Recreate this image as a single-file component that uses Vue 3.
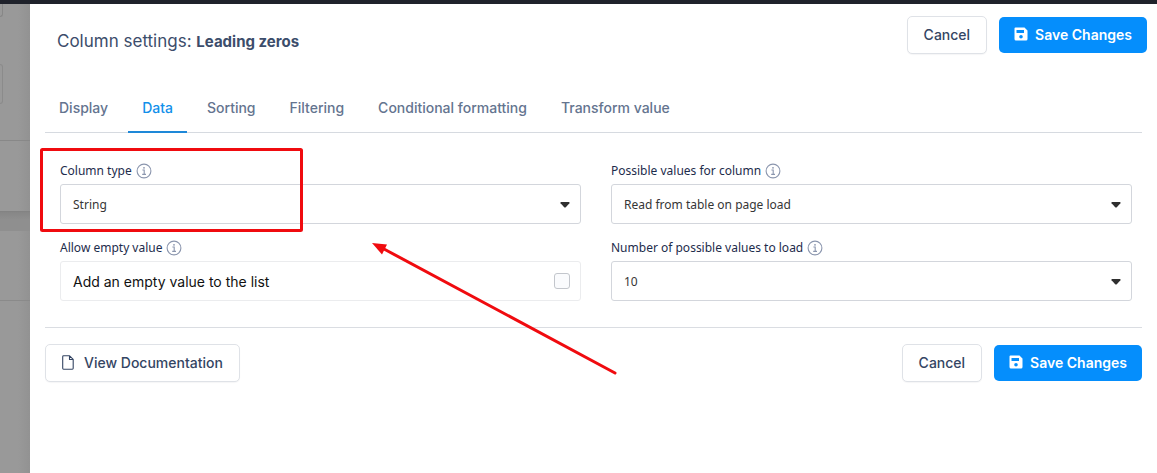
<template>
  <div class="page">
    <div class="topbar"></div>
    <div class="body">
      <div class="backdrop" aria-hidden="true">
        <div class="back-card">
          <div class="back-top"><span class="back-stub"></span></div>
          <div class="back-mid"><span class="back-box"></span></div>
          <div class="back-foot"></div>
        </div>
        <div class="back-gap"></div>
        <div class="back-row"></div>
        <div class="back-rest"></div>
      </div>

      <main class="panel">
        <header class="panel-header">
          <h1 class="title">Column settings: <strong>{{ columnName }}</strong></h1>
          <div class="btn-group">
            <button type="button" class="btn btn-default">Cancel</button>
            <button type="button" class="btn btn-primary">
              <svg class="icon-save" viewBox="0 0 14 14" width="14" height="14" fill="none">
                <path
                  fill="currentColor"
                  fill-rule="evenodd"
                  d="M1.5 0.5H10.5L13.5 3.5V12A1.5 1.5 0 0 1 12 13.5H2A1.5 1.5 0 0 1 0.5 12V1.5A1 1 0 0 1 1.5 0.5ZM2.5 3V6H10V3ZM7 8A1.8 1.8 0 1 0 7 11.6A1.8 1.8 0 1 0 7 8Z"
                />
              </svg>
              Save Changes
            </button>
          </div>
        </header>

        <nav class="tabs">
          <a
            v-for="tab in tabs"
            :key="tab"
            href="#"
            class="tab"
            :class="{ active: tab === activeTab }"
            @click.prevent="activeTab = tab"
          >{{ tab }}</a>
        </nav>

        <form class="fields" @submit.prevent>
          <div v-for="field in fields" :key="field.id" class="field">
            <div class="label-row">
              <label class="label" :for="field.id">{{ field.label }}</label>
              <svg class="icon-info" viewBox="0 0 16 16" width="16" height="16" fill="none">
                <circle cx="8" cy="8" r="6.9" stroke="currentColor" stroke-width="1.1" />
                <path d="M6.4 7H8.2V11.2M6.2 11.4H10" stroke="currentColor" stroke-width="1.1" />
                <circle cx="8" cy="4.8" r="0.9" fill="currentColor" />
              </svg>
            </div>
            <div v-if="field.options" class="select-wrap">
              <select :id="field.id" v-model="field.value" class="select">
                <option v-for="option in field.options" :key="option">{{ option }}</option>
              </select>
              <svg class="caret" viewBox="0 0 10 6" width="10" height="6">
                <path fill="currentColor" d="M1 0H9Q10 0.4 9.4 1.2L5.8 5.2Q5 6 4.2 5.2L0.6 1.2Q0 0.4 1 0Z" />
              </svg>
            </div>
            <label v-else class="check">
              <span>{{ field.text }}</span>
              <input :id="field.id" v-model="field.value" type="checkbox" class="checkbox" />
            </label>
          </div>
        </form>

        <footer class="panel-footer">
          <button type="button" class="btn btn-default">
            <svg class="icon-doc" viewBox="0 0 12 15" width="12" height="15" fill="none">
              <path
                d="M1.5 0.8H7.6L11.2 4.4V13.3Q11.2 14.2 10.3 14.2H1.5Q0.7 14.2 0.7 13.3V1.7Q0.7 0.8 1.5 0.8ZM7.5 1V4.5H11"
                stroke="currentColor"
                stroke-width="1.1"
                stroke-linejoin="round"
              />
            </svg>
            View Documentation
          </button>
          <div class="btn-group">
            <button type="button" class="btn btn-default">Cancel</button>
            <button type="button" class="btn btn-primary">
              <svg class="icon-save" viewBox="0 0 14 14" width="14" height="14" fill="none">
                <path
                  fill="currentColor"
                  fill-rule="evenodd"
                  d="M1.5 0.5H10.5L13.5 3.5V12A1.5 1.5 0 0 1 12 13.5H2A1.5 1.5 0 0 1 0.5 12V1.5A1 1 0 0 1 1.5 0.5ZM2.5 3V6H10V3ZM7 8A1.8 1.8 0 1 0 7 11.6A1.8 1.8 0 1 0 7 8Z"
                />
              </svg>
              Save Changes
            </button>
          </div>
        </footer>
      </main>
    </div>

    <!-- callout over the column type field -->
    <svg class="callout" viewBox="0 0 640 400" width="640" height="400" fill="none" aria-hidden="true">
      <rect x="41.5" y="149.5" width="260" height="81" rx="1" stroke="#f00b0f" stroke-width="3" />
      <path d="M384 249L615 373" stroke="#f00b0f" stroke-width="3" stroke-linecap="round" />
      <path d="M372 243L387 244.5L382 254.5Z" fill="#f00b0f" />
    </svg>
  </div>
</template>

<script setup>
import { ref } from 'vue'

const columnName = 'Leading zeros'

const tabs = ['Display', 'Data', 'Sorting', 'Filtering', 'Conditional formatting', 'Transform value']
const activeTab = ref('Data')

const fields = ref([
  { id: 'column-type', label: 'Column type', value: 'String', options: ['String'] },
  {
    id: 'possible-values',
    label: 'Possible values for column',
    value: 'Read from table on page load',
    options: ['Read from table on page load'],
  },
  { id: 'allow-empty', label: 'Allow empty value', value: false, text: 'Add an empty value to the list' },
  { id: 'values-count', label: 'Number of possible values to load', value: '10', options: ['10'] },
])
</script>

<style>
body {
  margin: 0;
}
</style>

<style scoped>
.page {
  position: relative;
  display: flex;
  flex-direction: column;
  min-height: 100vh;
  overflow: hidden;
  font-family: Inter, 'Liberation Sans', sans-serif;
  background: #ffffff;
}

.page * {
  box-sizing: border-box;
}

.topbar {
  height: 4px;
  background: #1f222b;
}

.body {
  flex: 1;
  display: flex;
}

.backdrop {
  width: 30px;
  flex: none;
  display: flex;
  flex-direction: column;
  background: linear-gradient(to right, #999999 60%, #929292);
}

.back-card {
  border-bottom: 1px solid #838383;
}

.back-top {
  height: 60px;
}

.back-stub {
  display: block;
  width: 3px;
  height: 13px;
  border: 1px solid #878787;
  border-width: 0 1px 1px 0;
  border-bottom-right-radius: 3px;
}

.back-mid {
  height: 77px;
  border-bottom: 1px solid #888888;
}

.back-box {
  display: block;
  width: 3px;
  height: 40px;
  border: 1px solid #8b8b8b;
  border-left: 0;
  border-radius: 0 3px 3px 0;
}

.back-foot {
  height: 70px;
}

.back-gap {
  height: 19px;
  background: linear-gradient(#868686, #8f8f8f 40%);
}

.back-row {
  height: 70px;
  border-bottom: 1px solid #8a8a8a;
}

.back-rest {
  flex: 1;
}

.panel {
  flex: 1;
  min-width: 0;
  padding: 12px 10px 0 15px;
}

.panel-header {
  display: flex;
  align-items: flex-start;
  justify-content: space-between;
  padding-left: 12px;
}

.title {
  margin: 13px 0 0;
  font-size: 17px;
  line-height: 24px;
  font-weight: 400;
  color: #3c4d6b;
}

.title strong {
  font-size: 15px;
  font-weight: 700;
}

.btn-group {
  display: flex;
  align-items: center;
  gap: 12px;
}

.btn {
  display: inline-flex;
  align-items: center;
  justify-content: center;
  border-radius: 5px;
  font-family: inherit;
  font-size: 14px;
  line-height: 20px;
  cursor: pointer;
}

.btn-default {
  height: 38px;
  padding: 0 16px;
  border: 1px solid #dfe2e7;
  background: #ffffff;
  color: #344563;
  font-weight: 500;
  box-shadow: 0 1px 1px rgba(16, 24, 40, 0.04);
}

.btn-primary {
  height: 36px;
  padding: 0 15px;
  border: none;
  background: #058efc;
  color: #ffffff;
  font-weight: 600;
}

.icon-save {
  margin-right: 7px;
  margin-bottom: 2px;
}

.icon-doc {
  margin-right: 10px;
  margin-bottom: 2px;
}

.tabs {
  display: flex;
  gap: 6px;
  margin: 29px 5px 0 0;
  border-bottom: 1px solid #d6dae0;
}

.tab {
  height: 50px;
  padding: 15px 14px 0;
  margin-bottom: -1px;
  border-bottom: 2px solid transparent;
  font-size: 14px;
  line-height: 20px;
  font-weight: 500;
  color: #64748f;
  text-decoration: none;
  white-space: nowrap;
}

.tab.active {
  color: #1290ea;
  border-bottom-color: #1e88d8;
}

.fields {
  display: grid;
  grid-template-columns: 1fr 1fr;
  gap: 12px 30px;
  padding: 26px 15px 26px;
}

.field {
  min-width: 0;
  font-family: 'Noto Sans', 'Open Sans', sans-serif;
}

.label-row {
  display: flex;
  align-items: center;
  gap: 4px;
  height: 24px;
  margin-bottom: 1px;
}

.label {
  font-size: 12px;
  line-height: 20px;
  color: #1d2c4c;
}

.icon-info {
  color: #8b96ae;
}

.select-wrap {
  position: relative;
}

.select {
  display: block;
  width: 100%;
  height: 40px;
  padding: 0 32px 0 12px;
  border: 1px solid #d3d6dc;
  border-radius: 3px;
  appearance: none;
  background: #ffffff;
  font-family: inherit;
  font-size: 12px;
  color: #363636;
}

.caret {
  position: absolute;
  top: 18px;
  right: 11px;
  color: #2f2f2f;
  pointer-events: none;
}

.check {
  display: flex;
  align-items: center;
  justify-content: space-between;
  height: 40px;
  padding: 0 10px 0 12px;
  border: 1px solid #ebecee;
  border-radius: 3px;
  font-family: Inter, 'Liberation Sans', sans-serif;
  font-size: 14px;
  color: #111111;
}

.checkbox {
  width: 16px;
  height: 16px;
  margin: 0;
  border: 1px solid #c3c6cc;
  border-radius: 3px;
  appearance: none;
  background: #fafbfd;
}

.checkbox:checked {
  background: #058efc;
}

.panel-footer {
  display: flex;
  align-items: center;
  justify-content: space-between;
  margin-right: 5px;
  padding-top: 16px;
  border-top: 1px solid #dadde2;
}

.callout {
  position: absolute;
  top: 0;
  left: 0;
  pointer-events: none;
}
</style>
